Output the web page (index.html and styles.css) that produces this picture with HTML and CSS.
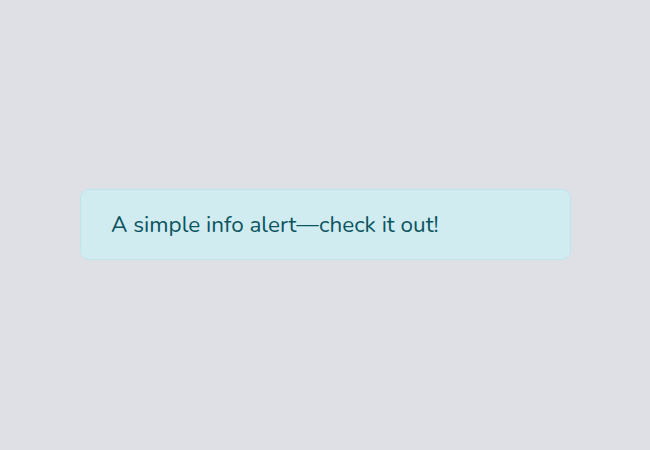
FILE: index.html
```html
<!DOCTYPE html>
<html>
<head>
<meta charset="utf-8">
<link rel="stylesheet" href="styles.css">
</head>
<body>
<div class="page">
  <div class="alert" role="alert">A simple info alert—check it out!</div>
</div>
</body>
</html>
```

FILE: styles.css
```css
html, body {
  margin: 0;
  padding: 0;
}
body {
  background: #dee0e5;
  font-family: "Nunito", "Lato", "Noto Sans", sans-serif;
}
.page {
  width: 650px;
  height: 450px;
  display: flex;
  align-items: center;
  justify-content: center;
}
.alert {
  box-sizing: border-box;
  width: 491px;
  height: 71px;
  margin-bottom: 1px;
  margin-left: 1px;
  padding: 0 30px 1px;
  display: flex;
  align-items: center;
  background: #d1ecf1;
  border: 1px solid #bee5eb;
  border-radius: 9px;
  color: #0c5460;
  font-size: 22.5px;
}
```
